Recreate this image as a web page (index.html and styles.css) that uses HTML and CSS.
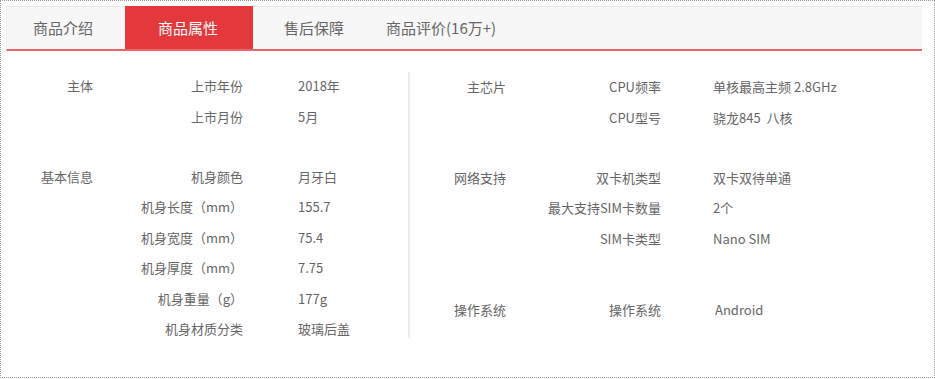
FILE: index.html
```html
<!DOCTYPE html>
<html lang="zh-CN">
<head>
<meta charset="utf-8">
<title>商品属性</title>
<link rel="stylesheet" href="styles.css">
</head>
<body>
<div class="frame">
  <ul class="tabs">
    <li class="tab">商品介绍</li>
    <li class="tab active">商品属性</li>
    <li class="tab">售后保障</li>
    <li class="tab">商品评价(16万+)</li>
  </ul>
  <div class="spec">
    <div class="col col-left">
      <div class="group">
        <div class="g-title">主体</div>
        <div class="rows">
          <div class="row"><span class="label">上市年份</span><span class="value">2018年</span></div>
          <div class="row"><span class="label">上市月份</span><span class="value">5月</span></div>
        </div>
      </div>
      <div class="group">
        <div class="g-title">基本信息</div>
        <div class="rows">
          <div class="row"><span class="label">机身颜色</span><span class="value">月牙白</span></div>
          <div class="row"><span class="label">机身长度（mm）</span><span class="value">155.7</span></div>
          <div class="row"><span class="label">机身宽度（mm）</span><span class="value">75.4</span></div>
          <div class="row"><span class="label">机身厚度（mm）</span><span class="value">7.75</span></div>
          <div class="row"><span class="label">机身重量（g）</span><span class="value">177g</span></div>
          <div class="row"><span class="label">机身材质分类</span><span class="value">玻璃后盖</span></div>
        </div>
      </div>
    </div>
    <div class="col col-right">
      <div class="group">
        <div class="g-title">主芯片</div>
        <div class="rows">
          <div class="row"><span class="label">CPU频率</span><span class="value">单核最高主频 2.8GHz</span></div>
          <div class="row"><span class="label">CPU型号</span><span class="value">骁龙845&nbsp; 八核</span></div>
        </div>
      </div>
      <div class="group">
        <div class="g-title">网络支持</div>
        <div class="rows">
          <div class="row"><span class="label">双卡机类型</span><span class="value">双卡双待单通</span></div>
          <div class="row"><span class="label">最大支持SIM卡数量</span><span class="value">2个</span></div>
          <div class="row"><span class="label">SIM卡类型</span><span class="value">Nano SIM</span></div>
        </div>
      </div>
      <div class="group group-os">
        <div class="g-title">操作系统</div>
        <div class="rows">
          <div class="row"><span class="label">操作系统</span><span class="value value-os">Android</span></div>
        </div>
      </div>
    </div>
  </div>
</div>
</body>
</html>
```
FILE: styles.css
```css
* { box-sizing: border-box; }
html, body { margin: 0; padding: 0; background: #fff; }
body {
  font-family: "Noto Sans CJK SC", "Microsoft YaHei", sans-serif;
  color: #666;
}
.frame {
  width: 935px;
  height: 378px;
  border: 1px dotted #9a9a9a;
  padding: 5px 12px 0 5px;
}
.tabs {
  list-style: none;
  margin: 0;
  padding: 0;
  display: flex;
  height: 45px;
  background: #f7f7f7;
  border-top: 1px solid #ececec;
  border-left: 1px solid #f0f0f0;
  border-bottom: 2px solid #e7676a;
}
.tab {
  height: 42px;
  line-height: 42px;
  font-size: 15px;
  color: #666;
  padding: 0 32px 0 26px;
  white-space: nowrap;
}
.tab:nth-child(2) { padding: 0 35px 0 33px; }
.tab:nth-child(3) { padding: 0 20px 0 31px; }
.tab:nth-child(4) { padding: 0 20px 0 22px; }
.tab.active {
  background: #e4393c;
  color: #fff;
  margin-top: -1px;
  height: 43px;
  line-height: 44px;
}
.spec {
  display: flex;
  align-items: flex-start;
  padding-top: 21px;
  font-size: 13px;
}
.col-left {
  flex: 0 0 402px;
  margin-top: -1px;
}
.col-right {
  flex: 1;
  border-left: 2px solid #ebebeb;
  padding-bottom: 12px;
}
.group {
  display: flex;
  align-items: flex-start;
}
.group + .group { margin-top: 29.5px; }
.group.group-os { margin-top: 41px; }
.g-title {
  text-align: right;
  height: 30.5px;
  line-height: 30.5px;
  white-space: nowrap;
}
.col-left .g-title { flex: 0 0 87px; }
.col-right .g-title { flex: 0 0 96px; }
.rows { display: flex; flex-direction: column; }
.row {
  display: flex;
  height: 30.5px;
  line-height: 30.5px;
  white-space: nowrap;
}
.label { text-align: right; }
.col-left .label { flex: 0 0 150px; }
.col-right .label { flex: 0 0 155px; }
.col-left .value { padding-left: 55px; }
.col-right .value { padding-left: 52px; }
.col-right .value.value-os { padding-left: 54px; }
```
